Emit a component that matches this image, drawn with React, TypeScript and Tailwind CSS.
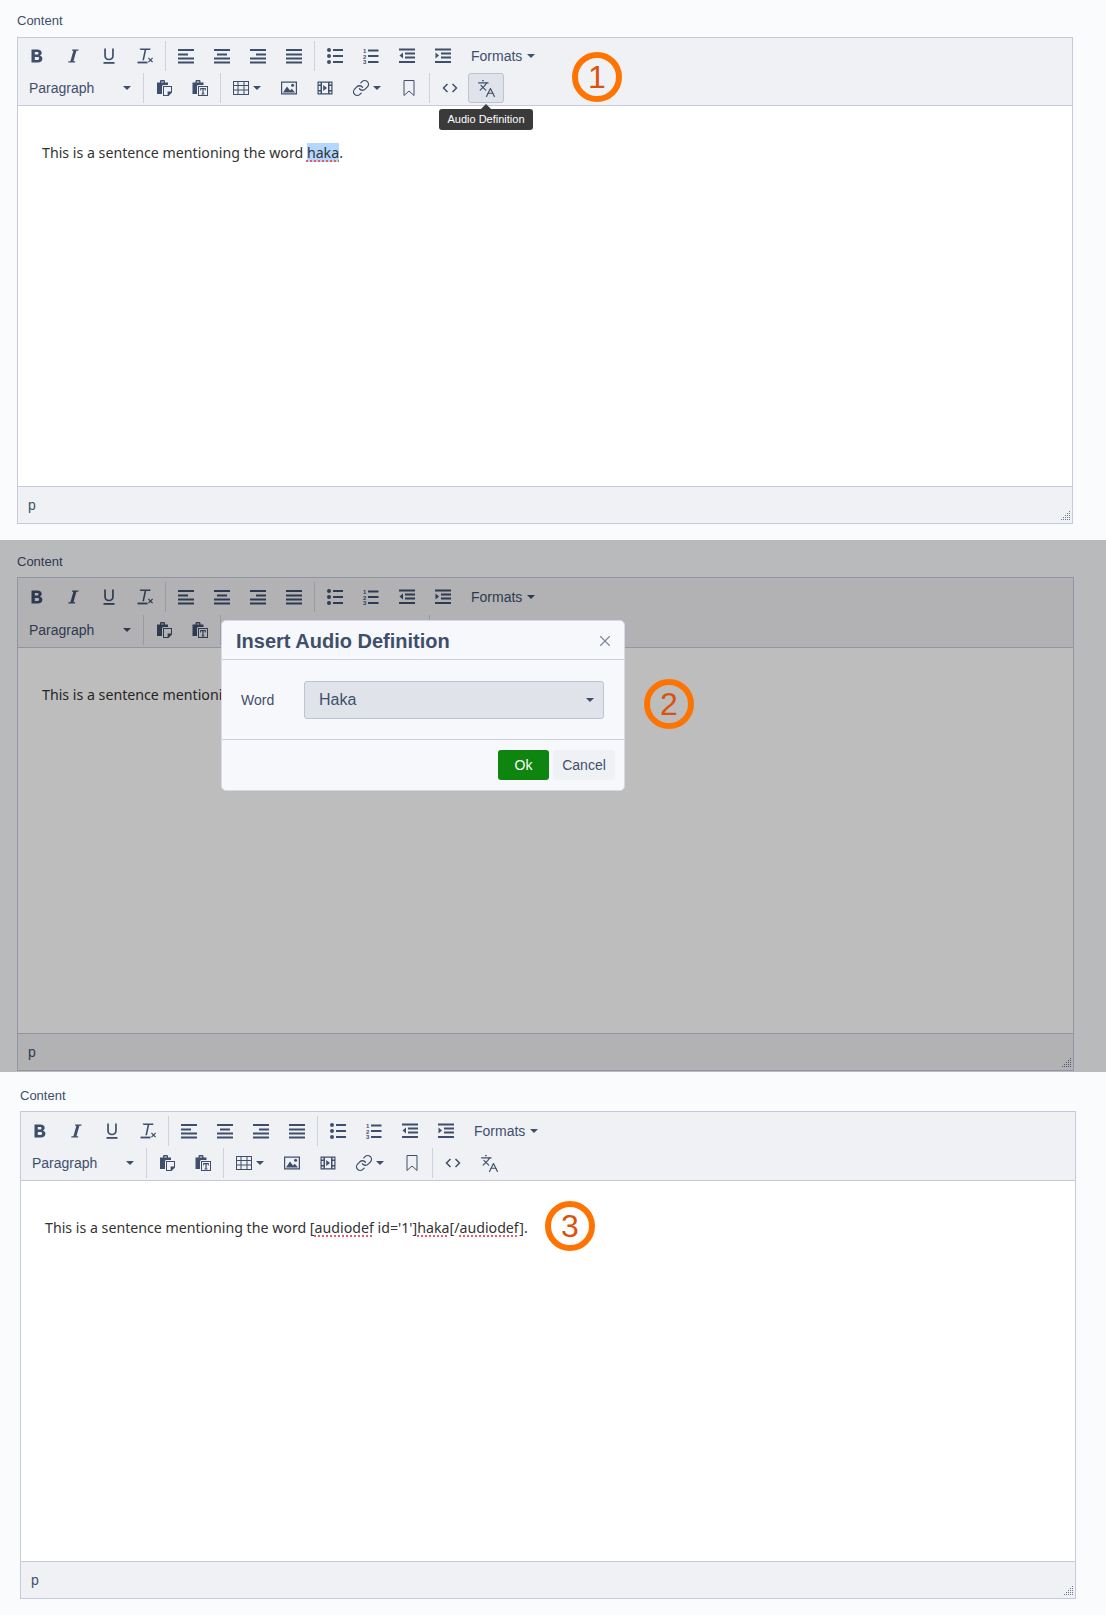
import type { ReactNode } from "react";
import { Languages, Link, X } from "lucide-react";

// ── Toolbar icons ───────────────────────────────────────────────────────────
function Ico({ children }: { children: ReactNode }) {
  return (
    <svg width="20" height="20" viewBox="0 0 20 20" fill="currentColor">
      {children}
    </svg>
  );
}

const Bars = ({ rows }: { rows: [number, number, number][] }) => (
  <Ico>
    {rows.map(([x, y, w], i) => (
      <rect key={i} x={x} y={y} width={w} height="2" />
    ))}
  </Ico>
);

const BoldIcon = () => (
  <Ico>
    <path
      fillRule="evenodd"
      d="M4.5 3.5h6c2.6 0 4.2 1.3 4.2 3.3 0 1.3-.7 2.3-1.9 2.8 1.6.4 2.6 1.6 2.6 3.1 0 2.3-1.8 3.8-4.6 3.8H4.5zM7.8 6v2.6h2.3c.9 0 1.4-.5 1.4-1.3S11 6 10.1 6zM7.8 11v2.9h2.7c1 0 1.6-.6 1.6-1.5s-.6-1.4-1.6-1.4z"
    />
  </Ico>
);
const ItalicIcon = () => (
  <Ico>
    <path d="M9.2 3.5h6.4l-.3 1.3h-1.9l-3 10.4h1.9l-.3 1.3H5.2l.3-1.3h1.9l3-10.4H9z" />
  </Ico>
);
const UnderlineIcon = () => (
  <Ico>
    <path d="M5.2 2.5h1.7v7.2c0 1.9 1.2 3 3.1 3s3.1-1.1 3.1-3V2.5h1.7v7.3c0 2.9-1.9 4.5-4.8 4.5s-4.8-1.6-4.8-4.5z" />
    <rect x="4.5" y="16" width="11" height="1.8" />
  </Ico>
);
const ClearIcon = () => (
  <Ico>
    <path d="M4.5 2.5h11l-.3 1.5h-4l-2.2 10.2H7.4l2.2-10.2h-4z" />
    <rect x="2.5" y="15.6" width="10" height="1.8" />
    <path d="M13 12.4l.8-.8 1.7 1.7 1.7-1.7.8.8-1.7 1.7 1.7 1.7-.8.8-1.7-1.7-1.7 1.7-.8-.8 1.7-1.7z" />
  </Ico>
);
const AlignLeft = () => <Bars rows={[[2, 3, 16], [2, 7.5, 10], [2, 11.5, 16], [2, 15.5, 16]]} />;
const AlignCenter = () => <Bars rows={[[2, 3, 16], [5, 7.5, 10], [2, 11.5, 16], [2, 15.5, 16]]} />;
const AlignRight = () => <Bars rows={[[2, 3, 16], [8, 7.5, 10], [2, 11.5, 16], [2, 15.5, 16]]} />;
const AlignJustify = () => <Bars rows={[[2, 3, 16], [2, 7.5, 16], [2, 11.5, 16], [2, 15.5, 16]]} />;

const BulletIcon = () => (
  <Ico>
    <circle cx="4" cy="4" r="2" />
    <circle cx="4" cy="10" r="2" />
    <circle cx="4" cy="16" r="2" />
    <rect x="8" y="3" width="10" height="2" />
    <rect x="8" y="9" width="10" height="2" />
    <rect x="8" y="15" width="10" height="2" />
  </Ico>
);
const NumberIcon = () => (
  <Ico>
    <text x="2" y="7" fontSize="6" fontWeight="700" fontFamily="Liberation Sans, sans-serif">1</text>
    <text x="2" y="12.5" fontSize="6" fontWeight="700" fontFamily="Liberation Sans, sans-serif">2</text>
    <text x="2" y="18" fontSize="6" fontWeight="700" fontFamily="Liberation Sans, sans-serif">3</text>
    <rect x="7" y="3.5" width="10.5" height="2" />
    <rect x="7" y="9" width="10.5" height="2" />
    <rect x="7" y="15" width="10.5" height="2" />
  </Ico>
);
const OutdentIcon = () => (
  <Ico>
    <rect x="2" y="2.5" width="16" height="2" />
    <rect x="8" y="6.5" width="10" height="2" />
    <rect x="8" y="10.5" width="10" height="2" />
    <rect x="2" y="15" width="16" height="2" />
    <path d="M6 6.5v6l-3.5-3z" />
  </Ico>
);
const IndentIcon = () => (
  <Ico>
    <rect x="2" y="2.5" width="16" height="2" />
    <rect x="8" y="6.5" width="10" height="2" />
    <rect x="8" y="10.5" width="10" height="2" />
    <rect x="2" y="15" width="16" height="2" />
    <path d="M2.5 6.5v6l3.5-3z" />
  </Ico>
);
const PasteIcon = () => (
  <Ico>
    <path
      fillRule="evenodd"
      d="M3 4.5h3V3.2C6 2.5 6.6 2 7.5 2h2c.9 0 1.5.5 1.5 1.2v1.3h3V7H9.5C8.7 7 8 7.7 8 8.5V16H3zM7.3 3.5v1h2.4v-1z"
    />
    <path fillRule="evenodd" d="M9 8h9v6.5L14.5 18H9zm1 1v8h3.6v-3.4H17V9z" />
  </Ico>
);
const PasteTextIcon = () => (
  <Ico>
    <path
      fillRule="evenodd"
      d="M2.5 4.5h3V3.2C5.5 2.5 6.1 2 7 2h2c.9 0 1.5.5 1.5 1.2v1.3h3V7H8.5C7.7 7 7 7.7 7 8.5V16H2.5zM6.8 3.5v1h2.4v-1z"
    />
    <path
      fillRule="evenodd"
      d="M8 8h10v10H8zm1 1v8h8V9zm1.2 1h5.6v2.4H15l-.2-1.2h-1.2v4.4h.9v.8h-3v-.8h.9v-4.4h-1.2l-.2 1.2h-.8z"
    />
  </Ico>
);
const TableIcon = () => (
  <Ico>
    <path
      fillRule="evenodd"
      d="M2 3h16v14H2zm1 1v3h3.5V4zm4.5 0v3h5V4zm6 0v3H17V4zM3 8v3.5h3.5V8zm4.5 0v3.5h5V8zm6 0v3.5H17V8zM3 12.5V16h3.5v-3.5zm4.5 0V16h5v-3.5zm6 0V16H17v-3.5z"
    />
  </Ico>
);
const ImageIcon = () => (
  <Ico>
    <path fillRule="evenodd" d="M2 3.5h16v13H2zm1.2 1.2v10.6h13.6V4.7z" />
    <path d="M4 14.5l4-6 3 4 1.8-1.8 3.2 3.8z" />
    <circle cx="13.6" cy="7.2" r="1.5" />
  </Ico>
);
const MediaIcon = () => (
  <Ico>
    <path
      fillRule="evenodd"
      d="M2.5 3.5h15v13h-15zm1.2 1.2v1.8h1.8V4.7zm0 3.2v4.2h1.8V7.9zm0 5.6v1.8h1.8v-1.8zM7 4.7v10.6h6V4.7zm7.5 0v1.8h1.8V4.7zm0 3.2v4.2h1.8V7.9zm0 5.6v1.8h1.8v-1.8z"
    />
    <path d="M8.2 7l3.8 3-3.8 3z" />
  </Ico>
);
const BookmarkIcon = () => (
  <Ico>
    <path d="M5 2.5h10v15L10 13l-5 4.5z" fill="none" stroke="currentColor" strokeWidth="1" />
  </Ico>
);
const CodeIcon = () => (
  <Ico>
    <path d="M7.5 6L3.5 10l4 4M12.5 6l4 4-4 4" fill="none" stroke="currentColor" strokeWidth="1.5" />
  </Ico>
);

function Caret() {
  return (
    <svg width="8" height="4" viewBox="0 0 8 4" fill="currentColor">
      <path d="M0 0h8L4 4z" />
    </svg>
  );
}

function ResizeGrip() {
  const dots: [number, number][] = [];
  for (let r = 0; r < 5; r++) {
    for (let c = 4 - r; c < 5; c++) dots.push([c * 2, r * 2]);
  }
  return (
    <svg width="9" height="9" viewBox="0 0 9 9" className="absolute right-[2px] bottom-[3px]" fill="#6b7690">
      {dots.map(([x, y], i) => (
        <rect key={i} x={x} y={y} width="1" height="1" />
      ))}
    </svg>
  );
}

// ── Toolbar bits ────────────────────────────────────────────────────────────
function Btn({ children, active, caret }: { children: ReactNode; active?: boolean; caret?: boolean }) {
  return (
    <div
      className={
        active
          ? "w-9 h-[30px] flex items-center justify-center rounded-[3px] border border-[#bcc3d4] bg-[#e0e3ea]"
          : caret
            ? "w-12 h-[30px] flex items-center pl-2 gap-[2px]"
            : "w-9 h-[30px] flex items-center justify-center"
      }
    >
      {children}
      {caret && <Caret />}
    </div>
  );
}

const Sep = () => <div className="w-px h-[30px] mx-[2px] bg-[#ccd1dc]" />;

function Toolbar({ className, showTranslateActive }: { className: string; showTranslateActive?: boolean }) {
  return (
    <div className={`flex flex-col pl-px pb-[2px] bg-[#f0f1f5] border-b border-[#c5c9db] text-[#3f4f6b] ${className}`}>
      <div className="flex items-center">
        <Btn><BoldIcon /></Btn>
        <Btn><ItalicIcon /></Btn>
        <Btn><UnderlineIcon /></Btn>
        <Btn><ClearIcon /></Btn>
        <Sep />
        <Btn><AlignLeft /></Btn>
        <Btn><AlignCenter /></Btn>
        <Btn><AlignRight /></Btn>
        <Btn><AlignJustify /></Btn>
        <Sep />
        <Btn><BulletIcon /></Btn>
        <Btn><NumberIcon /></Btn>
        <Btn><OutdentIcon /></Btn>
        <Btn><IndentIcon /></Btn>
        <div className="h-[30px] flex items-center pl-[10px] gap-[5px] text-[14px]">
          Formats
          <Caret />
        </div>
      </div>
      <div className="flex items-center">
        <div className="w-[122px] h-[30px] flex items-center justify-between pl-[10px] pr-[10px] text-[14px]">
          Paragraph
          <Caret />
        </div>
        <Sep />
        <Btn><PasteIcon /></Btn>
        <Btn><PasteTextIcon /></Btn>
        <Sep />
        <Btn caret><TableIcon /></Btn>
        <Btn><ImageIcon /></Btn>
        <Btn><MediaIcon /></Btn>
        <Btn caret><Link size={18} strokeWidth={1.7} className="mx-px" /></Btn>
        <Btn><BookmarkIcon /></Btn>
        <Sep />
        <Btn><CodeIcon /></Btn>
        <Btn active={showTranslateActive}><Languages size={19} strokeWidth={1.5} /></Btn>
      </div>
    </div>
  );
}

function Editor({
  className,
  toolbarClass,
  bodyClass,
  active,
  children,
}: {
  className: string;
  toolbarClass: string;
  bodyClass: string;
  active?: boolean;
  children: ReactNode;
}) {
  return (
    <div className={`border border-[#c5c9db] ${className}`}>
      <Toolbar className={toolbarClass} showTranslateActive={active} />
      <div className={`bg-white pt-[37px] pl-[24px] text-[14.2px] leading-[20px] text-[#333333] font-['Noto_Sans',sans-serif] ${bodyClass}`}>
        {children}
      </div>
      <div className="relative h-[37px] bg-[#f0f1f5] border-t border-[#c5c9db] flex items-center pl-[10px] text-[14px] text-[#3f4f6b]">
        p
        <ResizeGrip />
      </div>
    </div>
  );
}

const Misspelt = ({ children }: { children: ReactNode }) => (
  <span className="underline decoration-dotted decoration-2 decoration-[#ec5a62] underline-offset-[2px]">{children}</span>
);

function Marker({ n, className }: { n: number; className: string }) {
  return (
    <div
      className={`absolute w-[50px] h-[50px] rounded-full border-[6px] border-[#ff7300] flex items-center justify-center text-[32px] leading-none text-[#d9530e] ${className}`}
    >
      {n}
    </div>
  );
}

const Label = ({ className }: { className: string }) => (
  <div className={`text-[13px] leading-4 text-[#3f4f6b] ${className}`}>Content</div>
);

// ── Page ─────────────────────────────────────────────────────────────────────
export default function App() {
  return (
    <div className="w-[1106px] bg-[#fafbfd] font-['Liberation_Sans',Arial,sans-serif]">
      {/* step 1 */}
      <section className="relative h-[540px] pt-[13px] pl-[17px]">
        <Label className="mb-[8px]" />
        <Editor className="w-[1056px]" toolbarClass="pt-[3px] gap-[2px]" bodyClass="h-[380px]" active>
          This is a sentence mentioning the word{" "}
          <span className="bg-[#b4d7ff]">
            <Misspelt>haka</Misspelt>
          </span>
          .
        </Editor>
        <div className="absolute left-[439px] top-[109px] w-[94px] h-[21px] rounded-[3px] bg-[#3a3a3a] text-white text-[11px] flex items-center justify-center">
          Audio Definition
          <div className="absolute left-[42px] -top-[5px] w-0 h-0 border-x-[5px] border-x-transparent border-b-[5px] border-b-[#3a3a3a]" />
        </div>
        <Marker n={1} className="left-[572px] top-[52px]" />
      </section>

      {/* step 2 */}
      <section className="relative h-[532px] pt-[14px] pl-[17px]">
        <Label className="mb-[7px]" />
        <Editor className="w-[1057px]" toolbarClass="pt-[4px] gap-[3px]" bodyClass="h-[385px]">
          This is a sentence mentioning the word <Misspelt>haka</Misspelt>.
        </Editor>
        <div className="absolute inset-0 bg-[#000000]/[0.26]" />
        <div className="absolute left-[221px] top-[80px] w-[404px] h-[171px] flex flex-col rounded-[5px] bg-[#f7f8fb] border border-[#d5d9e5] text-[#3f4f6b]">
          <div className="h-[39px] shrink-0 flex items-center justify-between pt-px pl-[14px] pr-[10px] border-b border-[#ccd1dc]">
            <span className="text-[20px] font-bold">Insert Audio Definition</span>
            <X size={18} strokeWidth={1.5} className="text-[#7b859c]" />
          </div>
          <div className="h-[80px] shrink-0 flex items-center pl-[19px] border-b border-[#ccd1dc]">
            <span className="w-[63px] pt-px text-[14px]">Word</span>
            <div className="w-[300px] h-[38px] flex items-center justify-between pt-px pl-[14px] pr-[9px] rounded-[3px] bg-[#e0e3ea] border border-[#bcc3d4] text-[16px]">
              Haka
              <Caret />
            </div>
          </div>
          <div className="flex-1 flex items-center justify-end gap-[4px] pr-[9px] text-[14px]">
            <div className="w-[51px] h-[30px] rounded-[3px] bg-[#0e850e] text-white flex items-center justify-center font-medium">
              Ok
            </div>
            <div className="w-[62px] h-[30px] rounded-[3px] bg-[#f0f1f5] flex items-center justify-center">Cancel</div>
          </div>
        </div>
        <Marker n={2} className="left-[644px] top-[139px]" />
      </section>

      {/* step 3 */}
      <section className="relative h-[543px] pt-[16px] pl-[20px]">
        <Label className="mb-[7px]" />
        <Editor className="w-[1056px]" toolbarClass="pt-[4px] gap-[2px]" bodyClass="h-[380px]">
          This is a sentence mentioning the word [<Misspelt>audiodef</Misspelt> id='1']<Misspelt>haka</Misspelt>[/<Misspelt>audiodef</Misspelt>].
        </Editor>
        <Marker n={3} className="left-[545px] top-[129px]" />
      </section>
    </div>
  );
}
